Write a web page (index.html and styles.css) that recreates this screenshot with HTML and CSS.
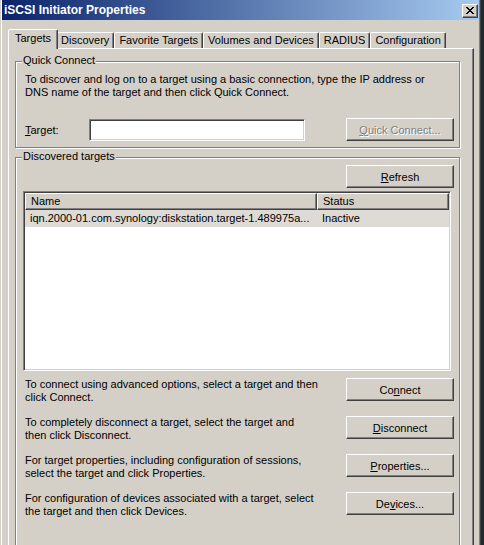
FILE: index.html
```html
<!DOCTYPE html>
<html lang="en">
<head>
    <meta charset="UTF-8">
    <title>iSCSI Initiator Properties</title>
    <link rel="stylesheet" href="styles.css">
</head>
<body>
    <div class="window">
        <div class="titlebar">
            <span class="title">iSCSI Initiator Properties</span>
            <span class="close">
                <svg width="8" height="7" viewBox="0 0 8 7">
                    <path d="M0 0h2v1h1v1h2v-1h1v-1h2v1h-1v1h-1v1h-1v1h1v1h1v1h1v1h-2v-1h-1v-1h-2v1h-1v1h-2v-1h1v-1h1v-1h1v-1h-1v-1h-1v-1h-1z" fill="#000"/>
                </svg>
            </span>
        </div>

        <div class="content">
            <div class="tabs">
                <div class="tab active">Targets</div>
                <div class="tab">Discovery</div>
                <div class="tab">Favorite Targets</div>
                <div class="tab">Volumes and Devices</div>
                <div class="tab">RADIUS</div>
                <div class="tab">Configuration</div>
            </div>

            <div class="panel">
                <div class="group quick">
                    <div class="group-title">Quick Connect</div>
                    <p class="desc">To discover and log on to a target using a basic connection, type the IP address or<br>DNS name of the target and then click Quick Connect.</p>
                    <div class="target-row">
                        <label class="target-label" for="target"><u>T</u>arget:</label>
                        <input class="text-input" type="text" id="target">
                        <button class="btn" disabled><u>Q</u>uick Connect...</button>
                    </div>
                </div>

                <div class="group discovered">
                    <div class="group-title">Discovered targets</div>
                    <div class="refresh-row">
                        <button class="btn"><u>R</u>efresh</button>
                    </div>
                    <div class="list">
                        <div class="list-head">
                            <div class="col-name head-cell">Name</div>
                            <div class="col-status head-cell">Status</div>
                        </div>
                        <div class="list-row">
                            <div class="col-name">iqn.2000-01.com.synology:diskstation.target-1.489975a...</div>
                            <div class="col-status">Inactive</div>
                        </div>
                    </div>

                    <div class="actions">
                        <div class="action">
                            <p class="desc">To connect using advanced options, select a target and then<br>click Connect.</p>
                            <button class="btn">Co<u>n</u>nect</button>
                        </div>
                        <div class="action">
                            <p class="desc">To completely disconnect a target, select the target and<br>then click Disconnect.</p>
                            <button class="btn"><u>D</u>isconnect</button>
                        </div>
                        <div class="action">
                            <p class="desc">For target properties, including configuration of sessions,<br>select the target and click Properties.</p>
                            <button class="btn"><u>P</u>roperties...</button>
                        </div>
                        <div class="action">
                            <p class="desc">For configuration of devices associated with a target, select<br>the target and then click Devices.</p>
                            <button class="btn">De<u>v</u>ices...</button>
                        </div>
                    </div>
                </div>
            </div>
        </div>
    </div>
</body>
</html>
```

FILE: styles.css
```css
* {
    box-sizing: border-box;
}

body {
    margin: 0;
    background-color: #1f2a2c;
    font-family: "Liberation Sans", Arial, sans-serif;
    font-size: 11px;
    color: #000;
    overflow: hidden;
}

.window {
    width: 481px;
    height: 560px;
    background-color: #d4d0c8;
    border-left: 1px solid #d4d0c8;
    border-right: 1px solid #404040;
    box-shadow: inset 1px 0 #fff, inset -1px 0 #808080;
    padding: 0 1px;
}

.titlebar {
    height: 20px;
    display: flex;
    align-items: center;
    justify-content: space-between;
    padding: 0 1px 0 2px;
    background: linear-gradient(to right, #0a246a, #a6caf0);
}

.title {
    color: #fff;
    font-weight: bold;
    font-size: 12px;
}

.close {
    width: 16px;
    height: 14px;
    margin-top: 1px;
    display: flex;
    align-items: center;
    justify-content: center;
    background-color: #d4d0c8;
    border: 1px solid;
    border-color: #fff #404040 #404040 #fff;
    box-shadow: inset -1px -1px #808080;
}

.content {
    padding: 9px 0 0 6px;
}

/* tab strip */
.tabs {
    display: flex;
    align-items: flex-end;
    height: 19px;
    padding-left: 2px;
    position: relative;
    z-index: 1;
}

.tab {
    height: 16px;
    line-height: 15px;
    padding: 0 4px;
    border: 1px solid;
    border-bottom: none;
    border-color: #fff #404040 transparent #fff;
    border-radius: 2px 2px 0 0;
    box-shadow: inset -1px 0 #808080;
    background-color: #d4d0c8;
}

.tab.active {
    height: 20px;
    line-height: 17px;
    margin: 0 -2px -1px -2px;
    padding: 0 6px;
    position: relative;
    z-index: 2;
}

.panel {
    width: 466px;
    height: 520px;
    border: 1px solid;
    border-color: #fff #404040 #404040 #fff;
    box-shadow: inset -1px -1px #808080;
    padding: 12px 0 0 6px;
}

/* group boxes */
.group {
    width: 445px;
    border: 1px solid #808080;
    box-shadow: inset 1px 1px #fff, 1px 1px #fff;
    padding: 0 5px 6px 7px;
}

.group-title {
    width: fit-content;
    margin: -8px 0 0 -1px;
    padding: 0 1px;
    line-height: 13px;
    background-color: #d4d0c8;
}

.desc {
    margin: 0 0 0 2px;
    line-height: 13px;
}

.quick .desc {
    margin-top: 6px;
}

.target-row {
    display: flex;
    align-items: center;
    margin-top: 19px;
}

.target-label {
    width: 66px;
    padding-left: 2px;
}

.text-input {
    width: 216px;
    height: 22px;
    border: 1px solid;
    border-color: #808080 #fff #fff #808080;
    box-shadow: inset 1px 1px #404040, inset -1px -1px #d4d0c8;
    background-color: #fff;
    margin-right: auto;
}

.btn {
    width: 108px;
    height: 23px;
    padding: 0;
    font-family: inherit;
    font-size: 11px;
    color: #000;
    background-color: #d4d0c8;
    border: 1px solid;
    border-color: #fff #404040 #404040 #fff;
    box-shadow: inset -1px -1px #808080;
}

.btn:disabled {
    color: #808080;
    text-shadow: 1px 1px #fff;
}

.discovered {
    margin-top: 9px;
    height: 420px;
}

.refresh-row {
    display: flex;
    justify-content: flex-end;
    margin-top: 2px;
}

/* target list */
.list {
    width: 428px;
    height: 180px;
    margin-top: 3px;
    background-color: #fff;
    border: 1px solid;
    border-color: #808080 #fff #fff #808080;
    box-shadow: inset 1px 1px #404040, inset -1px -1px #d4d0c8;
    padding: 1px;
}

.list-head,
.list-row {
    display: flex;
}

.head-cell {
    height: 17px;
    line-height: 15px;
    background-color: #d4d0c8;
    border: 1px solid;
    border-color: #fff #404040 #404040 #fff;
    box-shadow: inset -1px -1px #808080;
}

.col-name {
    width: 292px;
    padding-left: 5px;
    white-space: nowrap;
}

.col-status {
    width: 132px;
    padding-left: 5px;
}

.list-row {
    height: 17px;
    line-height: 16px;
    background-color: #dedbd6;
}

/* bottom actions */
.actions {
    display: flex;
    flex-direction: column;
    gap: 12px;
    margin-top: 7px;
}

.action {
    display: flex;
    justify-content: space-between;
    align-items: flex-start;
}
```
